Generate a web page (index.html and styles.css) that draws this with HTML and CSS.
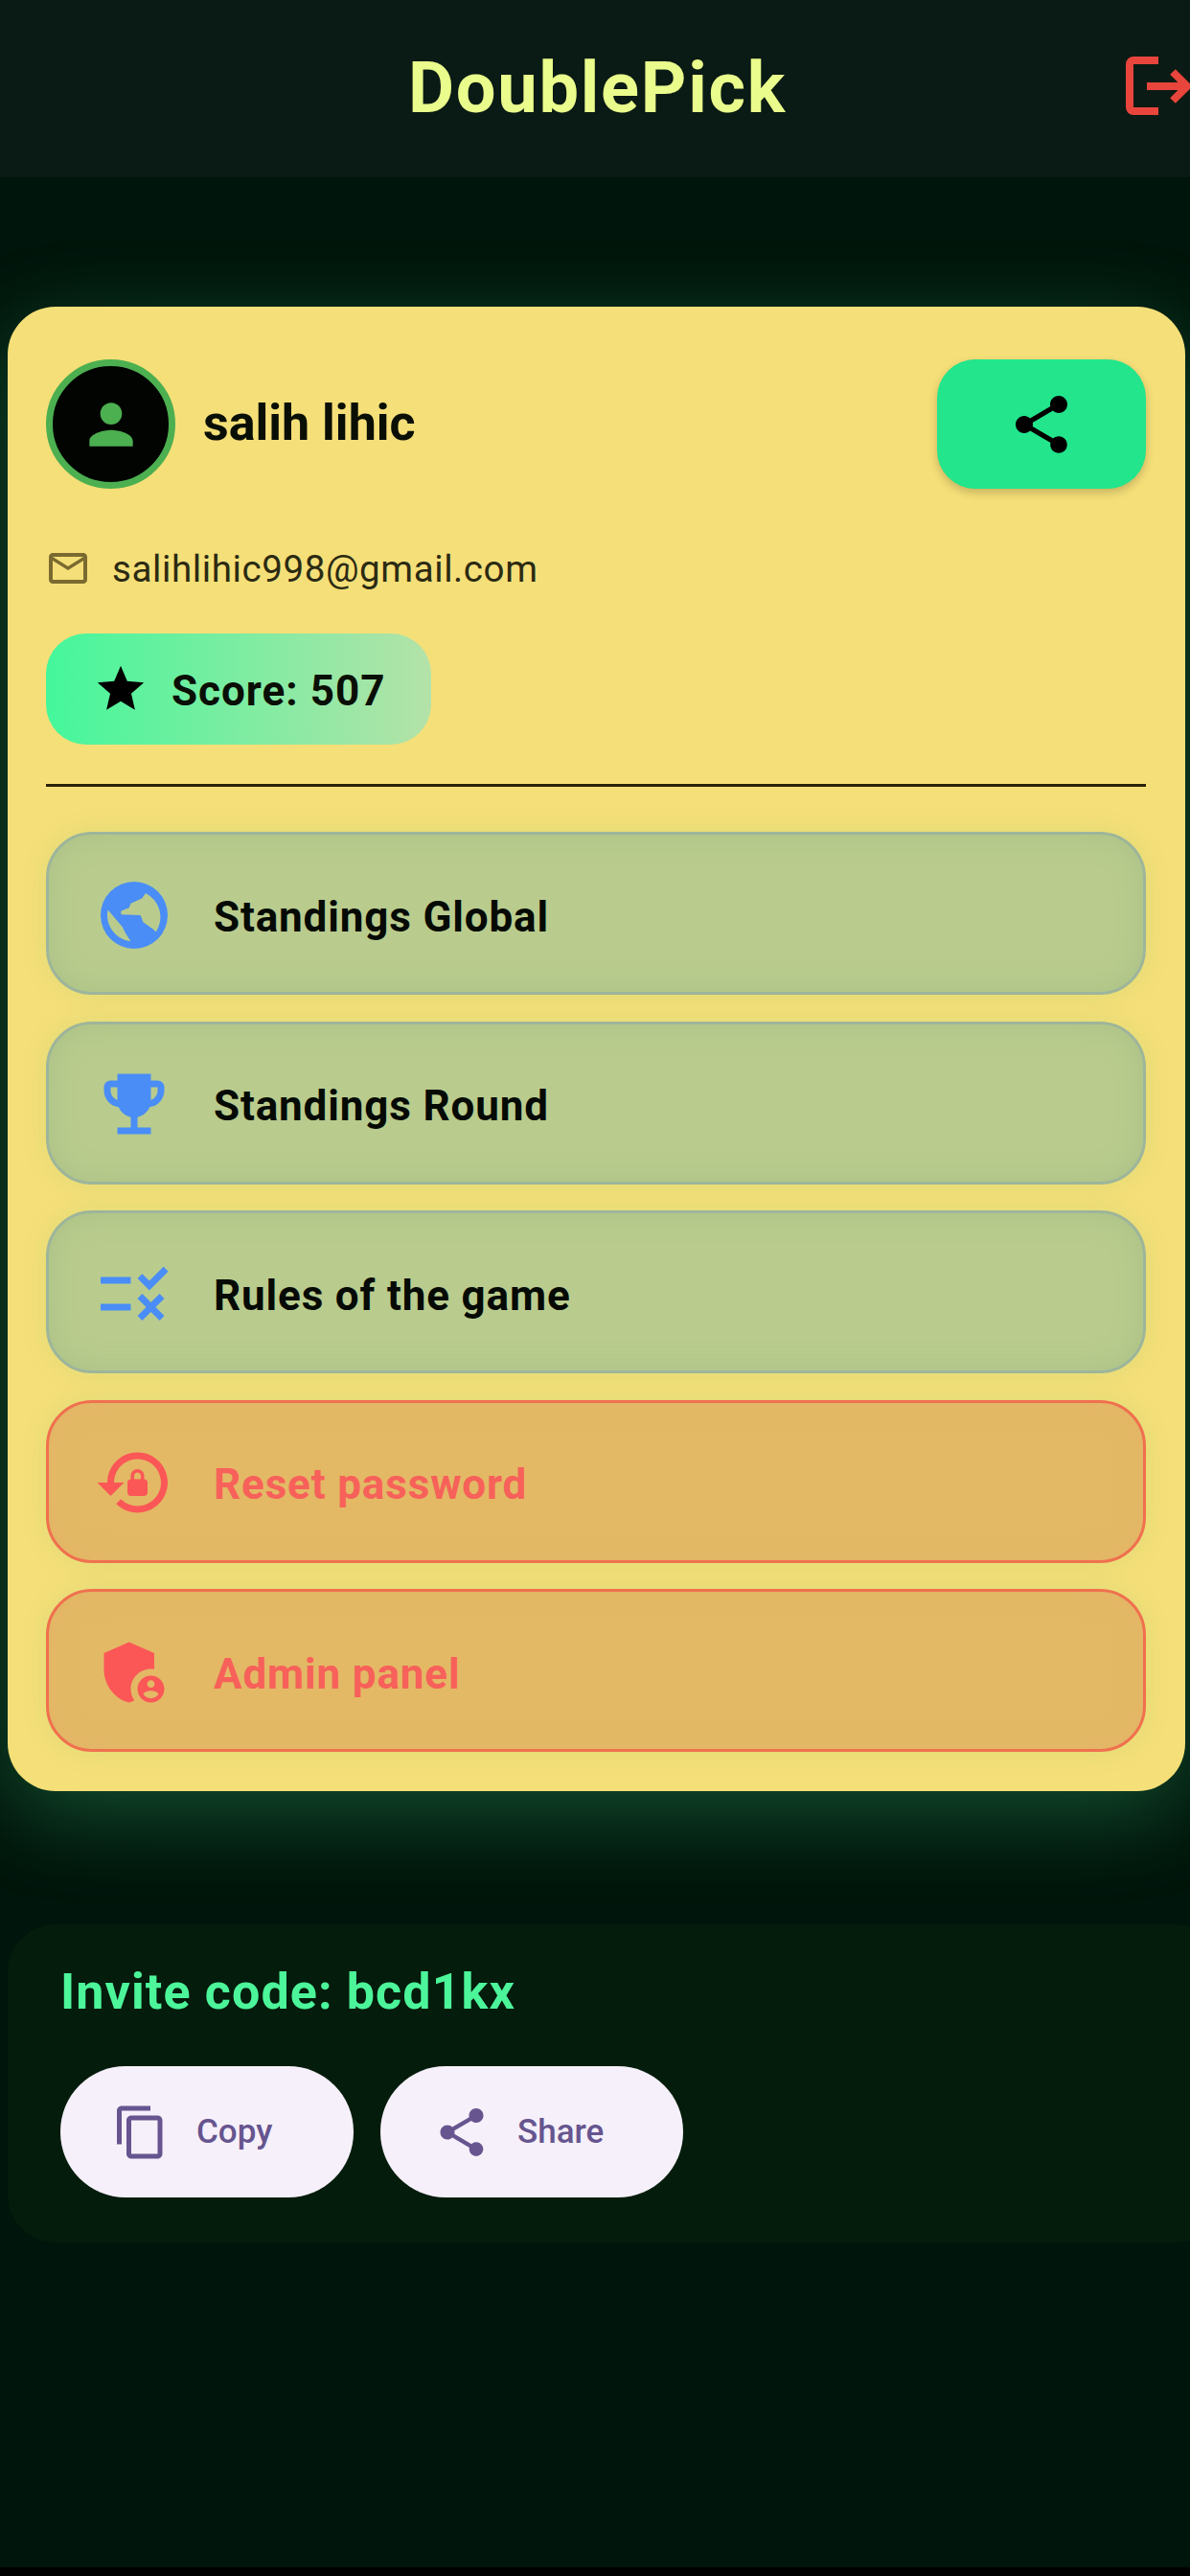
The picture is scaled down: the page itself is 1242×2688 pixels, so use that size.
FILE: index.html
```html
<!DOCTYPE html>
<html lang="en">
<head>
    <meta charset="UTF-8">
    <meta name="viewport" content="width=device-width, initial-scale=1.0">
    <title>DoublePick</title>
    <link rel="stylesheet" href="styles.css">
</head>
<body>
    <header class="app-bar">
        <h1 class="app-title">DoublePick</h1>
        <svg class="logout-icon" viewBox="0 0 70 66" fill="none" stroke="#e8453c" stroke-width="8">
            <path d="M37 5H11a4 4 0 0 0-4 4v45a4 4 0 0 0 4 4h26"/>
            <path d="M25 32h42M52 17l15 15-15 15"/>
        </svg>
    </header>

    <main class="content">
        <!-- Profile card -->
        <section class="profile-card">
            <div class="profile-top">
                <div class="avatar">
                    <svg viewBox="0 0 24 24"><path d="M12 12c2.21 0 4-1.79 4-4s-1.79-4-4-4-4 1.79-4 4 1.79 4 4 4zm0 2c-2.67 0-8 1.34-8 4v2h16v-2c0-2.66-5.33-4-8-4z"/></svg>
                </div>
                <div class="profile-name">salih lihic</div>
                <button class="share-main">
                    <svg viewBox="0 0 24 24"><path d="M18 16.08c-.76 0-1.44.3-1.96.77L8.91 12.7c.05-.23.09-.46.09-.7s-.04-.47-.09-.7l7.05-4.11c.54.5 1.25.81 2.04.81 1.66 0 3-1.34 3-3s-1.34-3-3-3-3 1.34-3 3c0 .24.04.47.09.7L8.04 9.81C7.5 9.31 6.79 9 6 9c-1.66 0-3 1.34-3 3s1.34 3 3 3c.79 0 1.5-.31 2.04-.81l7.12 4.16c-.05.21-.08.43-.08.65 0 1.61 1.31 2.92 2.92 2.92 1.61 0 2.92-1.31 2.92-2.92s-1.31-2.92-2.92-2.92z"/></svg>
                </button>
            </div>

            <div class="profile-email">
                <svg viewBox="0 0 24 24"><path d="M20 4H4c-1.1 0-1.99.9-1.99 2L2 18c0 1.1.9 2 2 2h16c1.1 0 2-.9 2-2V6c0-1.1-.9-2-2-2zm0 14H4V8l8 5 8-5v10zm-8-7L4 6h16l-8 5z"/></svg>
                <span>salihlihic998@gmail.com</span>
            </div>

            <div class="score-pill">
                <svg viewBox="0 0 24 24"><path d="M12 17.27L18.18 21l-1.64-7.03L22 9.24l-7.19-.61L12 2 9.19 8.63 2 9.24l5.46 4.73L5.82 21z"/></svg>
                <span>Score: 507</span>
            </div>

            <hr class="divider">

            <nav class="menu">
                <a class="menu-row">
                    <svg viewBox="0 0 24 24"><path fill-rule="evenodd" d="M12 2a10 10 0 1 0 0 20 10 10 0 0 0 0-20zM4.2 10.4l4.3 5.1 1 2 1.5 2.3C7 19.3 4 15.9 4 12c0-.55.07-1.08.2-1.6zM15.4 5.4l-1 1.5L11 8.5l-.5 1.3-2.4.9v1.1l5.8.2.8 2.1 3.1 2.2.7.7A8 8 0 0 0 15.4 5.4z"/></svg>
                    <span>Standings Global</span>
                </a>
                <a class="menu-row">
                    <svg viewBox="0 0 24 24"><path d="M19 5h-2V3H7v2H5c-1.1 0-2 .9-2 2v1c0 2.55 1.92 4.63 4.39 4.94.63 1.5 1.98 2.63 3.61 2.96V19H7v2h10v-2h-4v-3.1c1.63-.33 2.98-1.46 3.61-2.96C19.08 12.63 21 10.55 21 8V7c0-1.1-.9-2-2-2zM5 8V7h2v3.82C5.84 10.4 5 9.3 5 8zm14 0c0 1.3-.84 2.4-2 2.82V7h2v1z"/></svg>
                    <span>Standings Round</span>
                </a>
                <a class="menu-row">
                    <svg viewBox="0 0 24 24"><path d="M16.54 11L13 7.46l1.41-1.41 2.12 2.12 4.24-4.24 1.41 1.41L16.54 11zM11 7H2v2h9V7zm10 6.41L19.59 12 17 14.59 14.41 12 13 13.41 15.59 16 13 18.59 14.41 20 17 17.41 19.59 20 21 18.59 18.41 16 21 13.41zM11 15H2v2h9v-2z"/></svg>
                    <span>Rules of the game</span>
                </a>
                <a class="menu-row danger">
                    <svg viewBox="0 0 24 24"><path d="M13 3c-4.97 0-9 4.03-9 9H1l4 3.99L9 12H6c0-3.87 3.13-7 7-7s7 3.13 7 7-3.13 7-7 7c-1.93 0-3.68-.79-4.94-2.06l-1.42 1.42C8.27 19.99 10.51 21 13 21c4.97 0 9-4.03 9-9s-4.03-9-9-9zm2 8v-1c0-1.1-.9-2-2-2s-2 .9-2 2v1c-.55 0-1 .45-1 1v3c0 .55.45 1 1 1h4c.55 0 1-.45 1-1v-3c0-.55-.45-1-1-1zm-1 0h-2v-1c0-.55.45-1 1-1s1 .45 1 1v1z"/></svg>
                    <span>Reset password</span>
                </a>
                <a class="menu-row danger">
                    <svg viewBox="0 0 24 24"><path d="M17 11c.34 0 .67.04 1 .09V6.27L10.5 3 3 6.27v4.91c0 4.54 3.2 8.79 7.5 9.82.55-.13 1.08-.32 1.6-.55-.69-.98-1.1-2.17-1.1-3.45 0-3.31 2.69-6 6-6z"/><path d="M17 13c-2.21 0-4 1.79-4 4s1.79 4 4 4 4-1.79 4-4-1.79-4-4-4zm0 1.38c.62 0 1.12.51 1.12 1.12s-.51 1.12-1.12 1.12-1.12-.51-1.12-1.12.5-1.12 1.12-1.12zm0 5.37c-.93 0-1.74-.46-2.24-1.17.05-.72 1.51-1.08 2.24-1.08s2.19.36 2.24 1.08c-.5.71-1.31 1.17-2.24 1.17z"/></svg>
                    <span>Admin panel</span>
                </a>
            </nav>
        </section>

        <!-- Invite card -->
        <section class="invite-card">
            <div class="invite-code">Invite code: bcd1kx</div>
            <div class="invite-actions">
                <button class="pill-button copy-button">
                    <svg viewBox="0 0 24 24"><path d="M16 1H4c-1.1 0-2 .9-2 2v14h2V3h12V1zm3 4H8c-1.1 0-2 .9-2 2v14c0 1.1.9 2 2 2h11c1.1 0 2-.9 2-2V7c0-1.1-.9-2-2-2zm0 16H8V7h11v14z"/></svg>
                    <span>Copy</span>
                </button>
                <button class="pill-button share-button">
                    <svg viewBox="0 0 24 24"><path d="M18 16.08c-.76 0-1.44.3-1.96.77L8.91 12.7c.05-.23.09-.46.09-.7s-.04-.47-.09-.7l7.05-4.11c.54.5 1.25.81 2.04.81 1.66 0 3-1.34 3-3s-1.34-3-3-3-3 1.34-3 3c0 .24.04.47.09.7L8.04 9.81C7.5 9.31 6.79 9 6 9c-1.66 0-3 1.34-3 3s1.34 3 3 3c.79 0 1.5-.31 2.04-.81l7.12 4.16c-.05.21-.08.43-.08.65 0 1.61 1.31 2.92 2.92 2.92 1.61 0 2.92-1.31 2.92-2.92s-1.31-2.92-2.92-2.92z"/></svg>
                    <span>Share</span>
                </button>
            </div>
        </section>
    </main>

    <div class="bottom-strip"></div>
</body>
</html>
```

FILE: styles.css
```css
html, body {
    margin: 0;
    padding: 0;
    height: 2688px;
    overflow: hidden;
}
body {
    background: #00150b;
    font-family: Roboto, "Liberation Sans", sans-serif;
    color: #0a0f06;
    position: relative;
}
.app-bar {
    height: 185px;
    padding: 0 0 3px 5px;
    box-sizing: border-box;
    background: #0a1a14;
    display: flex;
    align-items: center;
    justify-content: center;
    position: relative;
}
.app-title {
    margin: 0;
    font-size: 74px;
    font-weight: 700;
    letter-spacing: 1.7px;
    color: #eafc8c;
}
.logout-icon {
    position: absolute;
    left: 1172px;
    top: 58px;
    width: 70px;
    height: 66px;
}
.content {
    padding: 135px 5px 0 8px;
}
.profile-card {
    background: #f5df78;
    border-radius: 50px;
    padding: 55px 41px 41px 40px;
    box-shadow: 0 24px 90px rgba(76, 245, 154, 0.26);
}
.profile-top {
    display: flex;
    align-items: center;
    height: 135px;
}
.avatar {
    width: 135px;
    height: 135px;
    box-sizing: border-box;
    border: 7px solid #4caf50;
    border-radius: 50%;
    background: #020402;
    display: flex;
    align-items: center;
    justify-content: center;
}
.avatar svg {
    width: 68px;
    height: 68px;
    fill: #4caf50;
}
.profile-name {
    margin-left: 29px;
    margin-bottom: 3px;
    font-size: 52px;
    font-weight: 700;
    flex: 1;
}
.share-main {
    width: 218px;
    height: 135px;
    border: none;
    border-radius: 40px;
    background: #22e58c;
    box-shadow: 0 4px 10px rgba(0, 0, 0, 0.2);
    display: flex;
    align-items: center;
    justify-content: center;
}
.share-main svg {
    width: 72px;
    height: 72px;
    fill: #000;
}
.profile-email {
    display: flex;
    align-items: center;
    margin-top: 59px;
    height: 48px;
    font-size: 38.5px;
    letter-spacing: 0.6px;
    color: #2b2a12;
}
.profile-email svg {
    width: 48px;
    height: 48px;
    margin-left: -1px;
    margin-right: 22px;
    fill: #7a6a30;
}
.score-pill {
    display: flex;
    align-items: center;
    width: 402px;
    height: 116px;
    box-sizing: border-box;
    margin-top: 44px;
    padding-left: 49px;
    border-radius: 42px;
    background: linear-gradient(90deg, #44f79b, #b4e2a8);
    font-size: 44px;
    font-weight: 700;
    letter-spacing: 1px;
}
.score-pill svg {
    width: 58px;
    height: 58px;
    margin-right: 24px;
    fill: #000;
}
.score-pill span {
    margin-top: 3px;
}
.divider {
    height: 3px;
    margin: 41px 0 47px;
    border: none;
    background: #2a2208;
}
.menu {
    display: flex;
    flex-direction: column;
    gap: 27.5px;
}
.menu-row {
    display: flex;
    align-items: center;
    height: 170px;
    box-sizing: border-box;
    padding: 3px 0 0 47px;
    border: 3px solid #9db59a;
    border-radius: 48px;
    background: #b9cc8e;
    box-shadow: 0 0 24px rgba(120, 200, 120, 0.18), inset 0 0 30px rgba(130, 160, 110, 0.25);
    font-size: 44px;
    font-weight: 700;
    letter-spacing: 0.85px;
    color: #060a05;
}
.menu-row svg {
    width: 84px;
    height: 84px;
    margin-right: 41px;
    fill: #4a8df6;
}
.menu-row span {
    margin-top: 4px;
}
.menu-row.danger {
    border-color: #f0704f;
    background: #e3b965;
    box-shadow: 0 0 24px rgba(120, 200, 120, 0.18), inset 0 0 30px rgba(230, 170, 110, 0.25);
    color: #f7615a;
}
.menu-row.danger svg {
    fill: #fb5757;
}
.invite-card {
    margin-top: 139px;
    margin-right: -40px;
    height: 332px;
    box-sizing: border-box;
    padding: 40px 0 0 55px;
    border-radius: 50px;
    background: #041c0c;
}
.invite-code {
    font-size: 52px;
    font-weight: 700;
    letter-spacing: 1.1px;
    color: #4cf59a;
}
.invite-actions {
    display: flex;
    gap: 28px;
    margin-top: 47px;
}
.pill-button {
    display: flex;
    align-items: center;
    height: 137px;
    box-sizing: border-box;
    border: none;
    border-radius: 68px;
    background: #f6f0fa;
    font-family: inherit;
    font-size: 35px;
    font-weight: 500;
    color: #66558f;
}
.pill-button svg {
    width: 60px;
    height: 60px;
    fill: #66558f;
}
.copy-button {
    width: 306px;
    padding: 0 0 0 54px;
}
.copy-button svg {
    margin-right: 28px;
}
.share-button {
    width: 316px;
    padding: 0 0 0 55px;
}
.share-button svg {
    margin-right: 28px;
}
.bottom-strip {
    position: absolute;
    left: 0;
    right: 0;
    bottom: 0;
    height: 9px;
    background: #000;
}
```
